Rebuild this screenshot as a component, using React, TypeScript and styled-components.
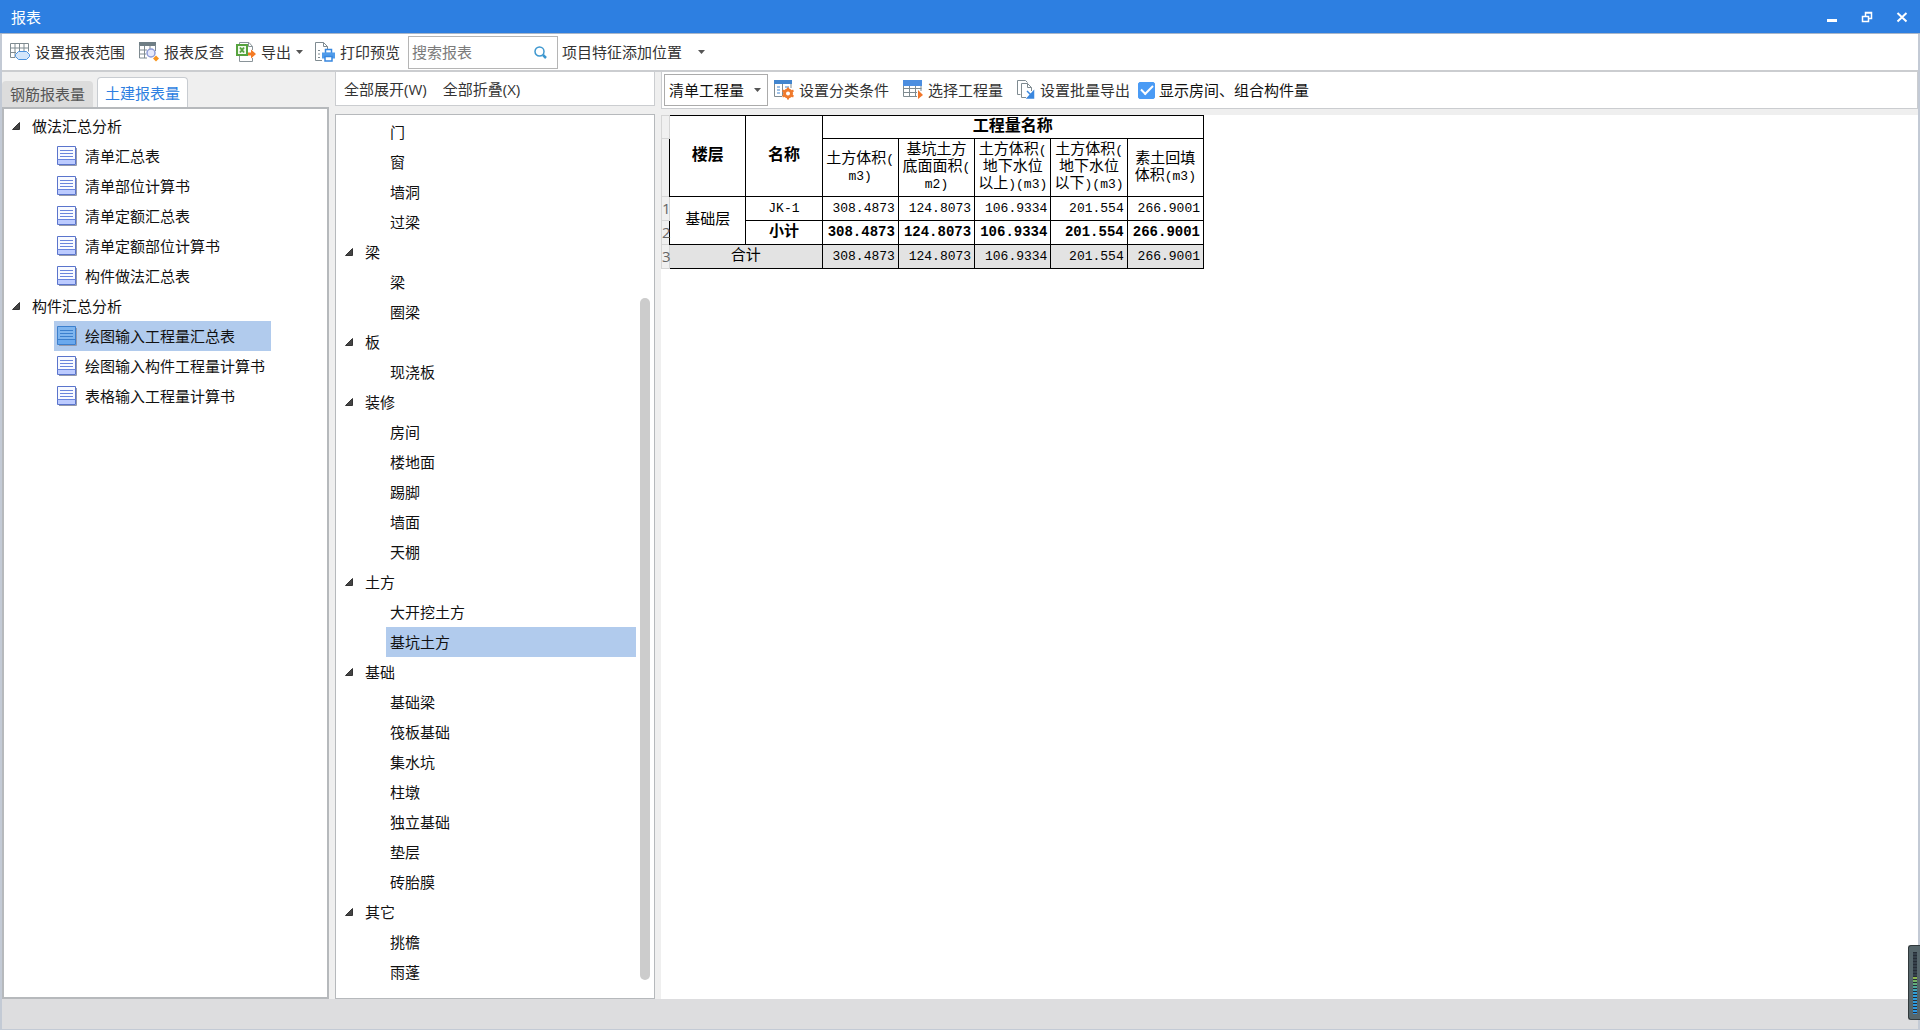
import React, { useState } from "react";
import styled, { createGlobalStyle, css } from "styled-components";

const GlobalStyle = createGlobalStyle`
  * { box-sizing: border-box; }
  body { margin: 0; }
  body, button, input, select {
    font-family: "Open Sans", "Noto Sans CJK SC", sans-serif;
    font-size: 15px;
    line-height: 20px;
    color: #111;
  }
  button {
    padding: 0;
    border: 0;
    background: none;
    text-align: left;
    cursor: pointer;
  }
  ul { margin: 0; padding: 0; list-style: none; }
`;

const Window = styled.div`
  display: flex;
  flex-direction: column;
  height: 100vh;
  background: #efefef;
  overflow: hidden;
`;

const TitleBar = styled.header`
  display: flex;
  align-items: center;
  justify-content: space-between;
  height: 34px;
  flex: none;
  padding: 0 12px 0 11px;
  background: #2d7fe1;
  border-bottom: 1px solid #a9b6c8;
`;

const Title = styled.h1`
  margin: 0;
  font-size: 15px;
  font-weight: 400;
  color: #fff;
`;

const WindowButtons = styled.div`
  display: flex;
  gap: 23px;
`;

const WindowButton = styled.button`
  display: flex;
  width: 12px;
  height: 12px;
`;

const Frame = styled.div`
  display: flex;
  flex-direction: column;
  flex: 1;
  min-height: 0;
  border: solid #c3cad5;
  border-width: 0 2px 1px;
`;

const Toolbar = styled.div`
  display: flex;
  align-items: center;
  flex: none;
  height: 38px;
  padding: 0 8px;
  background: #fff;
  border-bottom: 2px solid #cbcdd0;
`;

const ToolButton = styled.button<{ $space?: number }>`
  display: flex;
  align-items: center;
  gap: 5px;
  height: 28px;
  margin-right: ${(p) => p.$space ?? 14}px;
  color: #333;
  white-space: nowrap;
`;

const SearchBox = styled.label`
  display: flex;
  align-items: center;
  width: 150px;
  height: 33px;
  margin-right: 4px;
  padding: 0 10px 0 3px;
  border: 1px solid #b5b5b5;
`;

const SearchInput = styled.input`
  flex: 1;
  min-width: 0;
  padding: 0;
  border: 0;
  outline: 0;
  &::placeholder { color: #7b7b7b; opacity: 1; }
`;

const Main = styled.main`
  display: flex;
  flex: 1;
  min-height: 0;
  gap: 6px;
`;

const LeftColumn = styled.section`
  display: flex;
  flex-direction: column;
  width: 327px;
  flex: none;
`;

const Tabs = styled.div`
  display: flex;
  align-items: flex-end;
  gap: 4px;
  height: 35px;
  flex: none;
`;

const Tab = styled.button<{ $active?: boolean }>`
  height: 26px;
  padding: 0 8px;
  border-radius: 4px 4px 0 0;
  background: #dcdcdc;
  color: #555;
  ${(p) =>
    p.$active &&
    css`
      height: 30px;
      padding: 0 7px;
      border: 1px solid #c8ccd1;
      border-bottom: 0;
      background: #fff;
      color: #2d7fe1;
    `}
`;

const Panel = styled.div<{ $thick?: boolean }>`
  flex: 1;
  min-height: 0;
  overflow: hidden;
  background: #fff;
  border: ${(p) => (p.$thick ? 2 : 1)}px solid #b6b9bc;
`;

const MiddleColumn = styled.section`
  display: flex;
  flex-direction: column;
  gap: 8px;
  width: 320px;
  flex: none;
`;

const SubToolbar = styled.div<{ $height: number; $inset: number }>`
  display: flex;
  align-items: center;
  flex: none;
  height: ${(p) => p.$height}px;
  padding: 0 ${(p) => p.$inset}px;
  background: #fff;
  border: 1px solid #cbcdd0;
  border-top: 0;
`;

const TreeRow = styled.button<{ $indent: number }>`
  display: flex;
  align-items: center;
  gap: 12px;
  height: 30px;
  margin-left: ${(p) => p.$indent}px;
`;

const TreeLeaf = styled.button<{ $selected?: boolean; $inset: number }>`
  display: flex;
  align-items: center;
  gap: 8px;
  width: 100%;
  height: 30px;
  padding: 0 6px 0 ${(p) => p.$inset}px;
  background: ${(p) => (p.$selected ? "#b1cbed" : "transparent")};
`;

const LeafList = styled.ul<{ $indent: number; $fit?: boolean }>`
  margin-left: ${(p) => p.$indent}px;
  width: ${(p) => (p.$fit ? "max-content" : "auto")};
`;

const LeftTree = styled.ul`
  padding-top: 2px;
`;

const ScrollArea = styled.div`
  display: flex;
  gap: 4px;
  height: 100%;
  padding: 2px 4px 0 0;
`;

const MiddleTree = styled.ul`
  flex: 1;
`;

const ScrollTrack = styled.div`
  display: flex;
  flex-direction: column;
  justify-content: flex-end;
  width: 10px;
  padding-bottom: 18px;
`;

const ScrollThumb = styled.div`
  height: 79%;
  border-radius: 5px;
  background: #ccc;
`;

const RightColumn = styled.section`
  display: flex;
  flex-direction: column;
  gap: 6px;
  flex: 1;
  min-width: 0;
`;

const SelectWrap = styled.div`
  position: relative;
  width: 104px;
  height: 32px;
  margin-right: 6px;
  svg {
    position: absolute;
    right: 7px;
    top: 14px;
    pointer-events: none;
  }
`;

const Select = styled.select`
  width: 100%;
  height: 100%;
  padding: 0 4px;
  border: 1px solid #ababab;
  border-radius: 0;
  background: #fff;
  appearance: none;
`;

const CheckLabel = styled.label`
  display: flex;
  align-items: center;
  gap: 4px;
  white-space: nowrap;
`;

const CheckBox = styled.input`
  display: grid;
  place-items: center;
  width: 17px;
  height: 17px;
  margin: 0;
  border: 1px solid #4a9bf5;
  border-radius: 2px;
  appearance: none;
  &:checked { background: #4a9bf5; }
  &:checked::after {
    content: "";
    width: 10px;
    height: 5px;
    margin-bottom: 3px;
    border: solid #fff;
    border-width: 0 0 2px 2px;
    transform: rotate(-45deg);
  }
`;

const Sheet = styled.div`
  flex: 1;
  min-height: 0;
  background: #fff;
`;

const Table = styled.table`
  width: 543px;
  table-layout: fixed;
  border-collapse: collapse;
  font-family: "Liberation Mono", "Noto Sans CJK SC", monospace;
  font-size: 13px;
  line-height: 17px;
  color: #000;
`;

const RowHead = styled.th`
  padding: 0;
  border: 1px solid #d5d5d5;
  background: #f0f0f0;
  font-family: "Open Sans", sans-serif;
  font-size: 15px;
  font-weight: 400;
  color: #666;
`;

const RowCol = styled.col`
  width: 8px;
`;

const TableRow = styled.tr<{ $height: number; $shaded?: boolean }>`
  height: ${(p) => p.$height}px;
  background: ${(p) => (p.$shaded ? "#e3e3e3" : "#fff")};
`;

const HeadCell = styled.th`
  padding: 0;
  border: 1px solid #000;
  font-size: 16px;
`;

const NameHead = styled.th`
  padding: 0;
  border: 1px solid #000;
  font-weight: 400;
  white-space: nowrap;
`;

const Cell = styled.td<{ $bold?: boolean; $number?: boolean }>`
  padding: 0 ${(p) => (p.$number ? 3 : 0)}px 0 0;
  border: 1px solid #000;
  text-align: ${(p) => (p.$number ? "right" : "center")};
  font-size: ${(p) => (p.$bold ? 14 : 13)}px;
  font-weight: ${(p) => (p.$bold ? 700 : 400)};
`;

const Han = styled.span`
  font-size: 15px;
`;

const StatusBar = styled.footer`
  flex: none;
  height: 30px;
  background: #dddddf;
`;

const Meter = styled.div`
  position: fixed;
  right: 0;
  bottom: 10px;
  display: flex;
  width: 12px;
  height: 75px;
  padding: 6px 3px 5px 4px;
  border: 1px solid #30383b;
  border-right: 0;
  border-radius: 3px 0 0 3px;
  background: #56666b;
`;

const MeterBars = styled.div`
  flex: 1;
  background:
    repeating-linear-gradient(#262d36 0 1px, transparent 1px 3px),
    linear-gradient(#35404a 0 40%, #8fb84a 41%, #5fae7c 52%, #2f9fd8 66%, #2b96e6);
`;

const Caret = () => (
  <svg width="7" height="4" viewBox="0 0 7 4" aria-hidden="true">
    <path d="M0 0h7L3.500 4z" fill="#555" />
  </svg>
);

const Expander = ({ open }: { open: boolean }) => (
  <svg width="8" height="8" viewBox="0 0 8 8" aria-hidden="true">
    <path d={open ? "M7.5 .5v7h-7z" : "M1 0l5 4-5 4z"} fill="#444" stroke="#333" />
  </svg>
);

const RangeIcon = () => (
  <svg width="20" height="20" viewBox="0 0 20 20" fill="none" aria-hidden="true">
    <path d="M.5 1.500h18v8M.5 1.500v14H5M.5 6h18M.5 10.500H6M5 1.500v14M9.500 1.500v8M14 1.500v8" stroke="#7f8b91" />
    <path d="M8.500 9.500h8l3 3v2l-3 3h-8l-3-3v-2z" fill="#d3e6fb" stroke="#4c93de" />
  </svg>
);

const InspectIcon = () => (
  <svg width="20" height="20" viewBox="0 0 20 20" fill="none" aria-hidden="true">
    <path d="M0 0h17v4H0z" fill="#6f7e85" />
    <path d="M.5 3v13H8M16.500 3v6M.5 8H8M.5 12H7M5.500 4v12M11 4v3" stroke="#7f8b91" />
    <circle cx="12" cy="11" r="4" fill="#e6e9fb" stroke="#8d9bd6" strokeWidth="1.500" />
    <path d="M17 13.500l3 3-3 3-3-3z" fill="#f7941d" />
  </svg>
);

const ExportIcon = () => (
  <svg width="20" height="20" viewBox="0 0 20 20" fill="none" aria-hidden="true">
    <path d="M3.500 14v5.500h13V16M3.500 2V.5H13l3.500 4V8M12.500 .5v4h4" stroke="#8a9499" />
    <path d="M1 3h10v10H1z" fill="#f2faee" stroke="#57a33f" strokeWidth="2" />
    <path d="M4 5.500l4 5M8 5.500l-4 5" stroke="#57a33f" strokeWidth="2" />
    <path d="M12 10.500h3V7.500l5 4.500-5 4.500v-3h-3z" fill="#f47a24" />
  </svg>
);

const PrintIcon = () => (
  <svg width="20" height="20" viewBox="0 0 20 20" fill="none" aria-hidden="true">
    <path d="M7 18.500H.5V.5h8l4 4V7M8.500 .5v4h4M3 8.500h2M3 12h2M3 15.500h2" stroke="#7f8b91" />
    <path d="M10.500 7.500h6v4h-6z" fill="#fff" stroke="#3787df" strokeWidth="1.500" />
    <path d="M7 10.500h13v6H7z" fill="#4f9bea" />
    <path d="M10 14.500h7v4.500h-7z" fill="#fff" stroke="#3787df" strokeWidth="1.500" />
  </svg>
);

const SearchIcon = () => (
  <svg width="13" height="13" viewBox="0 0 13 13" fill="none" stroke="#3d97cf" aria-hidden="true">
    <circle cx="5.500" cy="5.500" r="4.500" strokeWidth="1.500" />
    <path d="M9 9l3 3" strokeWidth="2.500" />
  </svg>
);

const ClassifyIcon = () => (
  <svg width="20" height="20" viewBox="0 0 20 20" fill="none" aria-hidden="true">
    <path d="M.5 1v15.500H8M17 3v5M8.500 3v13" stroke="#7f8b91" />
    <path d="M0 0h18v4H0z" fill="#4185cf" />
    <path d="M3 7h3M3 10h3M3 13h3M11 7h4" stroke="#4185cf" />
    <circle cx="14" cy="13.500" r="3.500" stroke="#ef7a2d" strokeWidth="3" />
    <path d="M14 7.500v2M14 17.500v2M8.500 10.500l2 1M17.500 15.500l2 1M8.500 16.500l2-1M17.500 11.500l2-1" stroke="#ef7a2d" strokeWidth="2" />
  </svg>
);

const PickIcon = () => (
  <svg width="20" height="20" viewBox="0 0 20 20" fill="none" aria-hidden="true">
    <path d="M.5 5v11.500H14M18 5v6M.5 8.500h18M.5 12.500H14M6.500 5v12M12.500 5v12" stroke="#7f8b91" />
    <path d="M0 0h19v6H0z" fill="#4c8ee0" />
    <path d="M15 10l5 5-5 4z" fill="#f2762a" />
  </svg>
);

const BatchIcon = () => (
  <svg width="18" height="20" viewBox="0 0 18 20" fill="none" aria-hidden="true">
    <path d="M3.500 14.500h-3V.5h8l2 2M9 17.500H4.500v-14h6l4 4V11M10.500 3.500v4h4" stroke="#7f8b91" />
    <path d="M10 11l4 4M16.500 11.500V18h-6z" stroke="#3b87de" strokeWidth="1.500" fill="#3b87de" />
  </svg>
);

const SheetIcon = ({ active }: { active: boolean }) => (
  <svg width="20" height="20" viewBox="0 0 20 20" fill="none" aria-hidden="true">
    <path d="M2 19.500h17.500V2" stroke="#9299ac" />
    <path d="M.5 .5h18v18H.5z" fill={active ? "#7fb5ee" : "#f8faff"} stroke={active ? "#3b7fce" : "#5a74cc"} />
    <path d="M1 14h17v4H1z" fill={active ? "#6aa9ee" : "#bccbff"} />
    <path d="M.5 13.500h18M3 4.500h13M3 7.500h13M3 10.500h13" stroke={active ? "#3b7fce" : "#6a86dc"} />
  </svg>
);

const reports = [
  {
    name: "做法汇总分析",
    items: ["清单汇总表", "清单部位计算书", "清单定额汇总表", "清单定额部位计算书", "构件做法汇总表"],
  },
  {
    name: "构件汇总分析",
    items: ["绘图输入工程量汇总表", "绘图输入构件工程量计算书", "表格输入工程量计算书"],
  },
];

const components = [
  { name: "", items: ["门", "窗", "墙洞", "过梁"] },
  { name: "梁", items: ["梁", "圈梁"] },
  { name: "板", items: ["现浇板"] },
  { name: "装修", items: ["房间", "楼地面", "踢脚", "墙面", "天棚"] },
  { name: "土方", items: ["大开挖土方", "基坑土方"] },
  { name: "基础", items: ["基础梁", "筏板基础", "集水坑", "柱墩", "独立基础", "垫层", "砖胎膜"] },
  { name: "其它", items: ["挑檐", "雨蓬"] },
];

const quantityHeads = [
  [["土方体积", "("], ["", "m3)"]],
  [["基坑土方", ""], ["底面面积", "("], ["", "m2)"]],
  [["土方体积", "("], ["地下水位", ""], ["以上", ")(m3)"]],
  [["土方体积", "("], ["地下水位", ""], ["以下", ")(m3)"]],
  [["素土回填", ""], ["体积", "(m3)"]],
];

const quantities = ["308.4873", "124.8073", "106.9334", "201.554", "266.9001"];

interface BranchProps {
  name: string;
  items: string[];
  selected: string;
  onSelect: (item: string) => void;
  rowIndent: number;
  leafIndent: number;
  icons?: boolean;
}

function Branch({ name, items, selected, onSelect, rowIndent, leafIndent, icons }: BranchProps) {
  const [open, setOpen] = useState(true);
  return (
    <li>
      {name && (
        <TreeRow $indent={rowIndent} aria-expanded={open} onClick={() => setOpen(!open)}>
          <Expander open={open} />
          {name}
        </TreeRow>
      )}
      {open && (
        <LeafList $indent={leafIndent} $fit={icons}>
          {items.map((item) => (
            <li key={item}>
              <TreeLeaf $selected={item === selected} $inset={icons ? 3 : 4} onClick={() => onSelect(item)}>
                {icons && <SheetIcon active={item === selected} />}
                {item}
              </TreeLeaf>
            </li>
          ))}
        </LeafList>
      )}
    </li>
  );
}

function QuantityTable() {
  return (
    <Table>
      <colgroup>
        <RowCol />
        <col span={7} />
      </colgroup>
      <thead>
        <TableRow $height={23}>
          <RowHead />
          <HeadCell rowSpan={2}>楼层</HeadCell>
          <HeadCell rowSpan={2}>名称</HeadCell>
          <HeadCell colSpan={5}>工程量名称</HeadCell>
        </TableRow>
        <TableRow $height={58}>
          <RowHead />
          {quantityHeads.map((lines, i) => (
            <NameHead key={i}>
              {lines.map(([han, latin], j) => (
                <div key={j}>
                  {han && <Han>{han}</Han>}
                  {latin}
                </div>
              ))}
            </NameHead>
          ))}
        </TableRow>
      </thead>
      <tbody>
        <TableRow $height={24}>
          <RowHead>1</RowHead>
          <Cell rowSpan={2}><Han>基础层</Han></Cell>
          <Cell>JK-1</Cell>
          {quantities.map((q) => <Cell key={q} $number>{q}</Cell>)}
        </TableRow>
        <TableRow $height={24}>
          <RowHead>2</RowHead>
          <Cell $bold><Han>小计</Han></Cell>
          {quantities.map((q) => <Cell key={q} $number $bold>{q}</Cell>)}
        </TableRow>
        <TableRow $height={24} $shaded>
          <RowHead>3</RowHead>
          <Cell colSpan={2}><Han>合计</Han></Cell>
          {quantities.map((q) => <Cell key={q} $number>{q}</Cell>)}
        </TableRow>
      </tbody>
    </Table>
  );
}

export default function App() {
  const [report, setReport] = useState("绘图输入工程量汇总表");
  const [component, setComponent] = useState("基坑土方");

  return (
    <Window>
      <GlobalStyle />
      <TitleBar>
        <Title>报表</Title>
        <WindowButtons>
          <WindowButton aria-label="最小化">
            <svg width="12" height="12" viewBox="0 0 12 12"><path d="M1 8h10v3H1z" fill="#fff" /></svg>
          </WindowButton>
          <WindowButton aria-label="还原">
            <svg width="12" height="12" viewBox="0 0 12 12" fill="none" stroke="#fff" strokeWidth="1.500">
              <path d="M1.500 5.500h6v5h-6zM4.500 5V1.500h6v6H8M4 2h7M1 5.500h7" />
            </svg>
          </WindowButton>
          <WindowButton aria-label="关闭">
            <svg width="12" height="12" viewBox="0 0 12 12" stroke="#fff" strokeWidth="2"><path d="M1.500 2l9 8.500M10.500 2l-9 8.500" /></svg>
          </WindowButton>
        </WindowButtons>
      </TitleBar>
      <Frame>
        <Toolbar>
          <ToolButton><RangeIcon />设置报表范围</ToolButton>
          <ToolButton $space={12}><InspectIcon />报表反查</ToolButton>
          <ToolButton $space={12}><ExportIcon />导出<Caret /></ToolButton>
          <ToolButton $space={8}><PrintIcon />打印预览</ToolButton>
          <SearchBox>
            <SearchInput placeholder="搜索报表" aria-label="搜索报表" />
            <SearchIcon />
          </SearchBox>
          <ToolButton $space={16}>项目特征添加位置</ToolButton>
          <ToolButton aria-label="更多位置"><Caret /></ToolButton>
        </Toolbar>
        <Main>
          <LeftColumn>
            <Tabs role="tablist">
              <Tab role="tab">钢筋报表量</Tab>
              <Tab role="tab" aria-selected $active>土建报表量</Tab>
            </Tabs>
            <Panel $thick>
              <LeftTree>
                {reports.map((group) => (
                  <Branch key={group.name} {...group} selected={report} onSelect={setReport} rowIndent={8} leafIndent={50} icons />
                ))}
              </LeftTree>
            </Panel>
          </LeftColumn>
          <MiddleColumn>
            <SubToolbar $height={34} $inset={8}>
              <ToolButton $space={16}>全部展开(W)</ToolButton>
              <ToolButton>全部折叠(X)</ToolButton>
            </SubToolbar>
            <Panel>
              <ScrollArea>
                <MiddleTree>
                  {components.map((group) => (
                    <Branch key={group.name} {...group} selected={component} onSelect={setComponent} rowIndent={9} leafIndent={50} />
                  ))}
                </MiddleTree>
                <ScrollTrack><ScrollThumb /></ScrollTrack>
              </ScrollArea>
            </Panel>
          </MiddleColumn>
          <RightColumn>
            <SubToolbar $height={37} $inset={2}>
              <SelectWrap>
                <Select aria-label="工程量类型" defaultValue="清单工程量">
                  <option>清单工程量</option>
                  <option>定额工程量</option>
                </Select>
                <Caret />
              </SelectWrap>
              <ToolButton><ClassifyIcon />设置分类条件</ToolButton>
              <ToolButton><PickIcon />选择工程量</ToolButton>
              <ToolButton $space={8}><BatchIcon />设置批量导出</ToolButton>
              <CheckLabel>
                <CheckBox type="checkbox" defaultChecked />
                显示房间、组合构件量
              </CheckLabel>
            </SubToolbar>
            <Sheet><QuantityTable /></Sheet>
          </RightColumn>
        </Main>
        <StatusBar />
      </Frame>
      <Meter><MeterBars /></Meter>
    </Window>
  );
}
